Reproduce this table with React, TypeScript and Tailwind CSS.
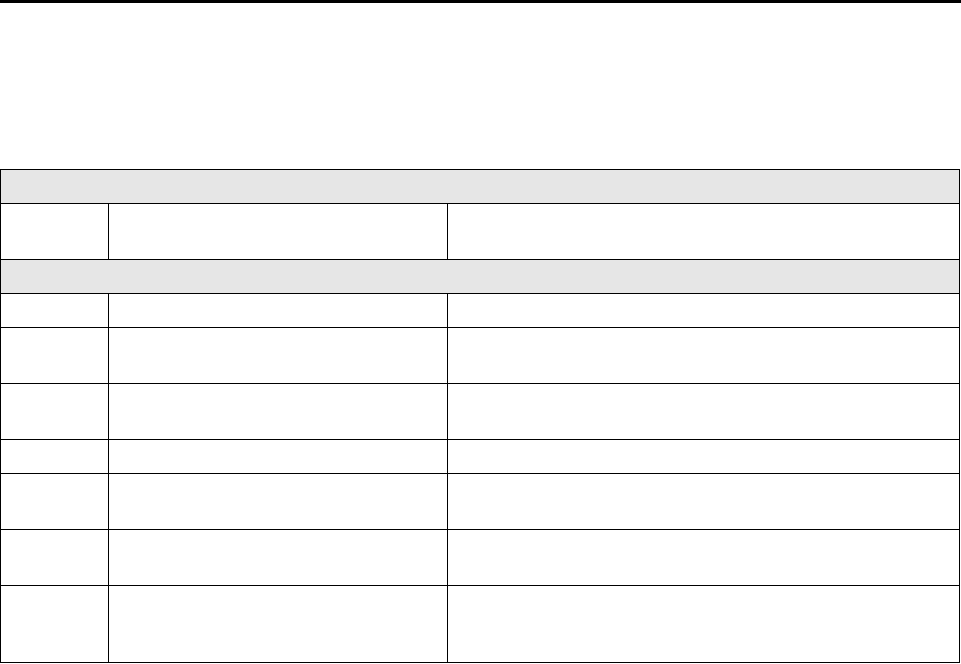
export default function App() {
  // row heights include the bottom border
  const rows: { kind: "head" | "row"; h: string }[] = [
    { kind: "head", h: "h-[34px]" },
    { kind: "row", h: "h-[56px]" },
    { kind: "head", h: "h-[34px]" },
    { kind: "row", h: "h-[34px]" },
    { kind: "row", h: "h-[56px]" },
    { kind: "row", h: "h-[56px]" },
    { kind: "row", h: "h-[34px]" },
    { kind: "row", h: "h-[56px]" },
    { kind: "row", h: "h-[56px]" },
    { kind: "row", h: "h-[77px]" },
  ]

  return (
    <div className="w-[961px] h-[664px] bg-white overflow-hidden" style={{ fontFamily: '"Liberation Sans", Arial, sans-serif' }}>
      <div className="h-[3px] w-full bg-black" />
      <div className="mt-[166px] w-[960px] border-l border-t border-black">
        {rows.map((r, i) =>
          r.kind === "head" ? (
            <div key={i} className={`${r.h} bg-[#e6e6e6] border-r border-b border-black`} />
          ) : (
            <div key={i} className={`${r.h} flex`}>
              <div className="w-[108px] border-r border-b border-black" />
              <div className="w-[339px] border-r border-b border-black" />
              <div className="w-[512px] border-r border-b border-black" />
            </div>
          )
        )}
      </div>
    </div>
  )
}
